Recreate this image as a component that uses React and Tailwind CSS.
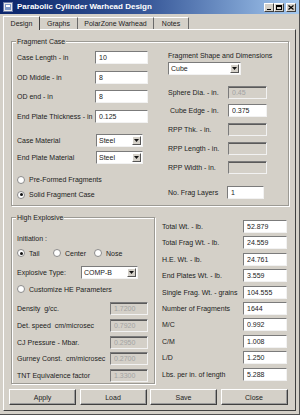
import React from 'react'

function Field({ value = '', disabled = false, className = '' }) {
  return (
    <input
      readOnly
      value={value}
      className={`h-[13px] px-[3px] py-0 text-[7px] leading-none outline-none border border-t-[#7b7b7b] border-l-[#7b7b7b] border-r-[#f2f2f2] border-b-[#f2f2f2] ${
        disabled ? 'bg-[#d4d0c8] text-[#a3a3a3] shadow-[inset_0_1px_0_#5a5a5a]' : 'bg-white text-[#222]'
      } ${className}`}
    />
  )
}

function Select({ value, className = '' }) {
  return (
    <div className={`h-[13px] flex items-center bg-white border border-t-[#7b7b7b] border-l-[#7b7b7b] border-r-[#f2f2f2] border-b-[#f2f2f2] ${className}`}>
      <span className="flex-1 pl-[2px] text-[#222]">{value}</span>
      <span className="w-[9px] h-[9px] mr-[1px] flex items-center justify-center bg-[#d4d0c8] border border-t-white border-l-white border-r-[#555] border-b-[#555]">
        <svg width="5" height="3" viewBox="0 0 5 3">
          <path d="M0 0h5L2.5 3z" fill="#111" />
        </svg>
      </span>
    </div>
  )
}

function Radio({ checked = false, label }) {
  return (
    <div className="flex items-center whitespace-nowrap">
      <span className="w-[8px] h-[8px] shrink-0 rounded-full bg-white border border-[#8a8a8a] flex items-center justify-center">
        {checked && <span className="w-[3px] h-[3px] rounded-full bg-[#111]" />}
      </span>
      <span className="ml-[4px]">{label}</span>
    </div>
  )
}

function GroupBox({ title, className = '', children }) {
  return (
    <div className={`relative border border-[#9c9a94] shadow-[inset_1px_1px_0_#fff,1px_1px_0_#fff] ${className}`}>
      <span className="absolute -top-[5px] left-[4px] px-[1px] bg-[#d4d0c8] leading-[9px] whitespace-nowrap">{title}</span>
      {children}
    </div>
  )
}

function Row({ label, children, labelClass, className = '' }) {
  return (
    <div className={`h-[13px] flex items-center ${className}`}>
      <span className={`whitespace-pre shrink-0 ${labelClass}`}>{label}</span>
      {children}
    </div>
  )
}

const totals = [
  ['Total Wt. - lb.', '52.879'],
  ['Total Frag Wt. - lb.', '24.559'],
  ['H.E. Wt. - lb.', '24.761'],
  ['End Plates Wt. - lb.', '3.559'],
  ['Single Frag. Wt. - grains', '104.555'],
  ['Number of Fragments', '1644'],
  ['M/C', '0.992'],
  ['C/M', '1.008'],
  ['L/D', '1.250'],
  ['Lbs. per in. of length', '5.288'],
]

export default function App() {
  return (
    <div className="w-[300px] h-[415px] bg-[#d4d0c8] flex flex-col text-[7px] leading-none text-[#222] font-[family-name:Liberation_Sans,Arial,sans-serif] overflow-hidden border-r border-b border-[#505050]">
      {/* Title bar */}
      <div className="h-[14px] shrink-0 flex items-center bg-linear-to-r from-[#0a246a] via-[#3a5a9a] to-[#a6caf0]">
        <svg width="10" height="10" viewBox="0 0 10 10" className="ml-[3px] shrink-0">
          <rect x="0.5" y="0.5" width="9" height="9" fill="#e8e8e8" stroke="#6b7ba8" />
          <rect x="2" y="2" width="6" height="6" fill="#7d98c8" />
          <rect x="3" y="3" width="4" height="2" fill="#fff" />
        </svg>
        <span className="ml-[4px] text-white font-bold text-[8px] whitespace-nowrap">Parabolic Cylinder Warhead Design</span>
        <div className="ml-auto mr-[3px] flex items-center">
          <span className="w-[10px] h-[9px] flex items-end justify-center pb-[1px] bg-[#d4d0c8] border border-t-white border-l-white border-r-[#404040] border-b-[#404040]">
            <span className="w-[4px] h-[1px] bg-black" />
          </span>
          <span className="w-[10px] h-[9px] flex items-center justify-center bg-[#d4d0c8] border border-t-white border-l-white border-r-[#404040] border-b-[#404040]">
            <span className="w-[6px] h-[5px] border border-black border-t-2" />
          </span>
          <span className="ml-[2px] w-[10px] h-[9px] flex items-center justify-center bg-[#d4d0c8] border border-t-white border-l-white border-r-[#404040] border-b-[#404040]">
            <svg width="6" height="5" viewBox="0 0 6 5">
              <path d="M0.5 0.5l5 4M5.5 0.5l-5 4" stroke="#000" strokeWidth="1.2" />
            </svg>
          </span>
        </div>
      </div>

      {/* Tabs */}
      <div className="h-[14px] mt-[1px] shrink-0 flex items-end pl-[3px] relative z-10">
        <div className="h-[14px] w-[37px] -mb-[1px] flex items-center justify-center bg-[#d4d0c8] border-l border-t border-white border-r-[1px] border-r-[#404040]">Design</div>
        <div className="h-[12px] w-[38px] flex items-center justify-center border-t border-white border-r border-r-[#6a6a6a]">Graphs</div>
        <div className="h-[12px] w-[76px] flex items-center justify-center border-t border-white border-r border-r-[#6a6a6a]">PolarZone Warhead</div>
        <div className="h-[12px] w-[35px] flex items-center justify-center border-t border-white border-r border-r-[#6a6a6a]">Notes</div>
      </div>

      {/* Tab panel */}
      <div className="mx-[3px] h-[382px] shrink-0 flex flex-col border border-t-white border-l-white border-r-[#404040] border-b-[#404040]">
        <GroupBox title="Fragment Case" className="mt-[11px] ml-[7px] w-[278px] h-[165px] shrink-0 flex">
          {/* left column */}
          <div className="ml-[5px] w-[133px] flex flex-col">
            <Row label="Case Length - in" labelClass="w-[78px]" className="mt-[9px]"><Field value="10" className="w-[53px]" /></Row>
            <Row label="OD Middle - in" labelClass="w-[78px]" className="mt-[7px]"><Field value="8" className="w-[53px]" /></Row>
            <Row label="OD end - in" labelClass="w-[78px]" className="mt-[6px]"><Field value="8" className="w-[53px]" /></Row>
            <Row label="End Plate Thickness - in" labelClass="w-[78px]" className="mt-[7px]"><Field value="0.125" className="w-[53px]" /></Row>
            <Row label="Case Material" labelClass="w-[79px]" className="mt-[11px]"><Select value="Steel" className="w-[47px]" /></Row>
            <Row label="End Plate Material" labelClass="w-[79px]" className="mt-[4px]"><Select value="Steel" className="w-[47px]" /></Row>
            <div className="h-[13px] mt-[9px] flex items-center"><Radio label="Pre-Formed Fragments" /></div>
            <div className="h-[13px] mt-[2px] flex items-center"><Radio checked label="Solid Fragment Case" /></div>
          </div>
          {/* right column */}
          <div className="ml-[18px] w-[115px] flex flex-col">
            <div className="h-[10px] mt-[8px] flex items-center whitespace-nowrap">Fragment Shape and Dimensions</div>
            <Select value="Cube" className="mt-[2px] w-[73px]" />
            <Row label="Sphere Dia. - in." labelClass="w-[60px]" className="mt-[11px]"><Field value="0.45" disabled className="w-[39px]" /></Row>
            <Row label=" Cube Edge - in." labelClass="w-[60px]" className="mt-[5px]"><Field value="0.375" className="w-[39px]" /></Row>
            <Row label="RPP Thk. - in." labelClass="w-[60px]" className="mt-[6px]"><Field disabled className="w-[39px]" /></Row>
            <Row label="RPP Length - in." labelClass="w-[60px]" className="mt-[6px]"><Field disabled className="w-[39px]" /></Row>
            <Row label="RPP Width - in." labelClass="w-[60px]" className="mt-[6px]"><Field disabled className="w-[39px]" /></Row>
            <Row label="No. Frag Layers" labelClass="w-[59px]" className="mt-[12px]"><Field value="1" className="w-[37px]" /></Row>
          </div>
        </GroupBox>

        <div className="flex mt-[11px] shrink-0">
          <GroupBox title="High Explosive" className="ml-[7px] w-[144px] h-[167px] shrink-0 flex flex-col pl-[5px]">
            <div className="h-[10px] mt-[15px] flex items-center">Initiation :</div>
            <div className="h-[10px] mt-[5px] flex items-center">
              <div className="w-[36px]"><Radio checked label="Tail" /></div>
              <div className="w-[41px]"><Radio label="Center" /></div>
              <Radio label="Nose" />
            </div>
            <Row label="Explosive Type:" labelClass="w-[64px]" className="mt-[8px]"><Select value="COMP-B" className="w-[57px]" /></Row>
            <div className="h-[10px] mt-[5px] flex items-center"><Radio label="Customize HE Parameters" /></div>
            <Row label="Density  g/cc." labelClass="w-[93px]" className="mt-[8px]"><Field value="1.7200" disabled className="w-[38px]" /></Row>
            <Row label="Det. speed  cm/microsec" labelClass="w-[93px]" className="mt-[4px]"><Field value="0.7920" disabled className="w-[38px]" /></Row>
            <Row label="CJ Pressure - Mbar." labelClass="w-[93px]" className="mt-[4px]"><Field value="0.2950" disabled className="w-[38px]" /></Row>
            <Row label="Gurney Const.  cm/microsec" labelClass="w-[93px]" className="mt-[3px]"><Field value="0.2700" disabled className="w-[38px]" /></Row>
            <Row label="TNT Equivalence factor" labelClass="w-[93px]" className="mt-[4px]"><Field value="1.3300" disabled className="w-[38px]" /></Row>
          </GroupBox>

          <div className="ml-[7px] mt-[3px] flex flex-col gap-[3.4px]">
            {totals.map(([label, value]) => (
              <Row key={label} label={label} labelClass="w-[81px]"><Field value={value} className="w-[44px]" /></Row>
            ))}
          </div>
        </div>

        <div className="mt-[5px] ml-[5px] flex gap-[3.5px]">
          {['Apply', 'Load', 'Save', 'Close'].map((b) => (
            <button
              key={b}
              type="button"
              className="w-[67px] h-[16px] bg-[#d4d0c8] text-[7px] text-[#222] border border-t-white border-l-white border-r-[#404040] border-b-[#404040] shadow-[inset_-1px_-1px_0_#9a9a9a]"
            >
              {b}
            </button>
          ))}
        </div>
      </div>
    </div>
  )
}
